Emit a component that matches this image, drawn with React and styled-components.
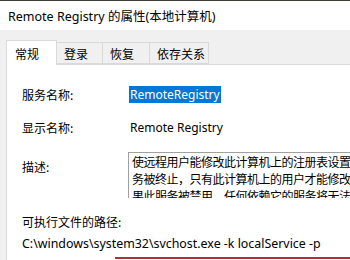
import React from "react";
import styled, { createGlobalStyle } from "styled-components";

const GlobalStyle = createGlobalStyle`
  html, body {
    margin: 0;
    padding: 0;
    background: #f0f0f0;
  }
  body {
    font-family: "Noto Sans", "Noto Sans CJK SC", sans-serif;
    font-size: 12px;
    color: #000;
  }
`;

const Window = styled.div`
  width: 350px;
  height: 260px;
  overflow: hidden;
  background: #f0f0f0;
  border-top: 1px solid #3e3e36;
  box-sizing: border-box;
  display: flex;
  flex-direction: column;
`;

const TitleBar = styled.div`
  height: 29px;
  flex: none;
  background: #fff;
  display: flex;
  align-items: center;
  padding-left: 8px;
  font-size: 12.5px;
  white-space: nowrap;
`;

const Body = styled.div`
  flex: 1;
  padding: 10px 0 0 6px;
  display: flex;
  flex-direction: column;
  min-height: 0;
`;

const TabStrip = styled.div`
  display: flex;
  align-items: flex-end;
  height: 24px;
  flex: none;
  position: relative;
  z-index: 1;
`;

const Tab = styled.div`
  box-sizing: border-box;
  width: ${(p) => p.w}px;
  height: ${(p) => (p.active ? 25 : 22)}px;
  margin-bottom: ${(p) => (p.active ? -1 : 0)}px;
  border: 1px solid #d9d9d9;
  border-left-width: ${(p) => (p.first ? 1 : 0)}px;
  border-bottom: ${(p) => (p.active ? "none" : "1px solid #d9d9d9")};
  background: ${(p) => (p.active ? "#fff" : "#f0f0f0")};
  padding-left: ${(p) => (p.active ? 8 : 7)}px;
  display: flex;
  align-items: center;
  font-family: "Noto Sans CJK SC", sans-serif;
  font-size: 12px;
`;

const Panel = styled.div`
  flex: 1;
  background: #fff;
  border-left: 1px solid #d9d9d9;
  border-top: 1px solid #d9d9d9;
  padding: 12px 0 0 15px;
  display: flex;
  flex-direction: column;
  min-height: 0;
`;

const Row = styled.div`
  box-sizing: border-box;
  display: grid;
  grid-template-columns: 106px 1fr;
  align-items: ${(p) => (p.top ? "start" : "center")};
  height: ${(p) => p.h}px;
  padding-top: ${(p) => p.pt || 0}px;
  flex: none;
`;

const Label = styled.div`
  font-family: "Noto Sans CJK SC", sans-serif;
  font-size: 12px;
  line-height: 17px;
  white-space: nowrap;
  padding-top: ${(p) => p.pt || 0}px;
`;

const Value = styled.div`
  white-space: nowrap;
  padding-left: 2px;
`;

const Selected = styled.span`
  background: #0078d7;
  color: #fff;
  display: inline-block;
  height: 17px;
  line-height: 17px;
  padding: 0 1px;
  margin-left: -1px;
`;

const DescBox = styled.div`
  box-sizing: border-box;
  height: 46px;
  border: 1px solid #a0a0a0;
  border-right: none;
  border-bottom: none;
  padding: 0 0 0 3px;
  overflow: hidden;
  font-family: "Noto Sans CJK SC", sans-serif;
  font-size: 12px;
  letter-spacing: -0.5px;
  line-height: 17px;
  white-space: nowrap;
`;

const Path = styled.div`
  white-space: nowrap;
  font-size: 12.4px;
  height: 26px;
  flex: none;
  display: flex;
  align-items: center;
`;

const FocusLine = styled.div`
  height: 2px;
  flex: none;
  margin: 1px 0 0 93px;
  background: #a4373a;
`;

const tabs = [
  { label: "常规", w: 51 },
  { label: "登录", w: 46 },
  { label: "恢复", w: 47 },
  { label: "依存关系", w: 59 },
];

const descLines = [
  "使远程用户能修改此计算机上的注册表设置。如果此服",
  "务被终止，只有此计算机上的用户才能修改注册表。如",
  "果此服务被禁用，任何依赖它的服务将无法启动。",
];

export default function App() {
  return (
    <>
      <GlobalStyle />
      <Window>
        <TitleBar>Remote Registry 的属性(本地计算机)</TitleBar>
        <Body>
          <TabStrip>
            {tabs.map((t, i) => (
              <Tab key={t.label} w={t.w} active={i === 0} first={i === 0}>
                {t.label}
              </Tab>
            ))}
          </TabStrip>
          <Panel>
            <Row h={34}>
              <Label>服务名称:</Label>
              <Value>
                <Selected>RemoteRegistry</Selected>
              </Value>
            </Row>
            <Row h={33}>
              <Label>显示名称:</Label>
              <Value>Remote Registry</Value>
            </Row>
            <Row h={69} pt={8} top>
              <Label pt={6}>描述:</Label>
              <DescBox>
                {descLines.map((l) => (
                  <div key={l}>{l}</div>
                ))}
              </DescBox>
            </Row>
            <Label>可执行文件的路径:</Label>
            <Path>C:\windows\system32\svchost.exe -k localService -p</Path>
            <FocusLine />
          </Panel>
        </Body>
      </Window>
    </>
  );
}
